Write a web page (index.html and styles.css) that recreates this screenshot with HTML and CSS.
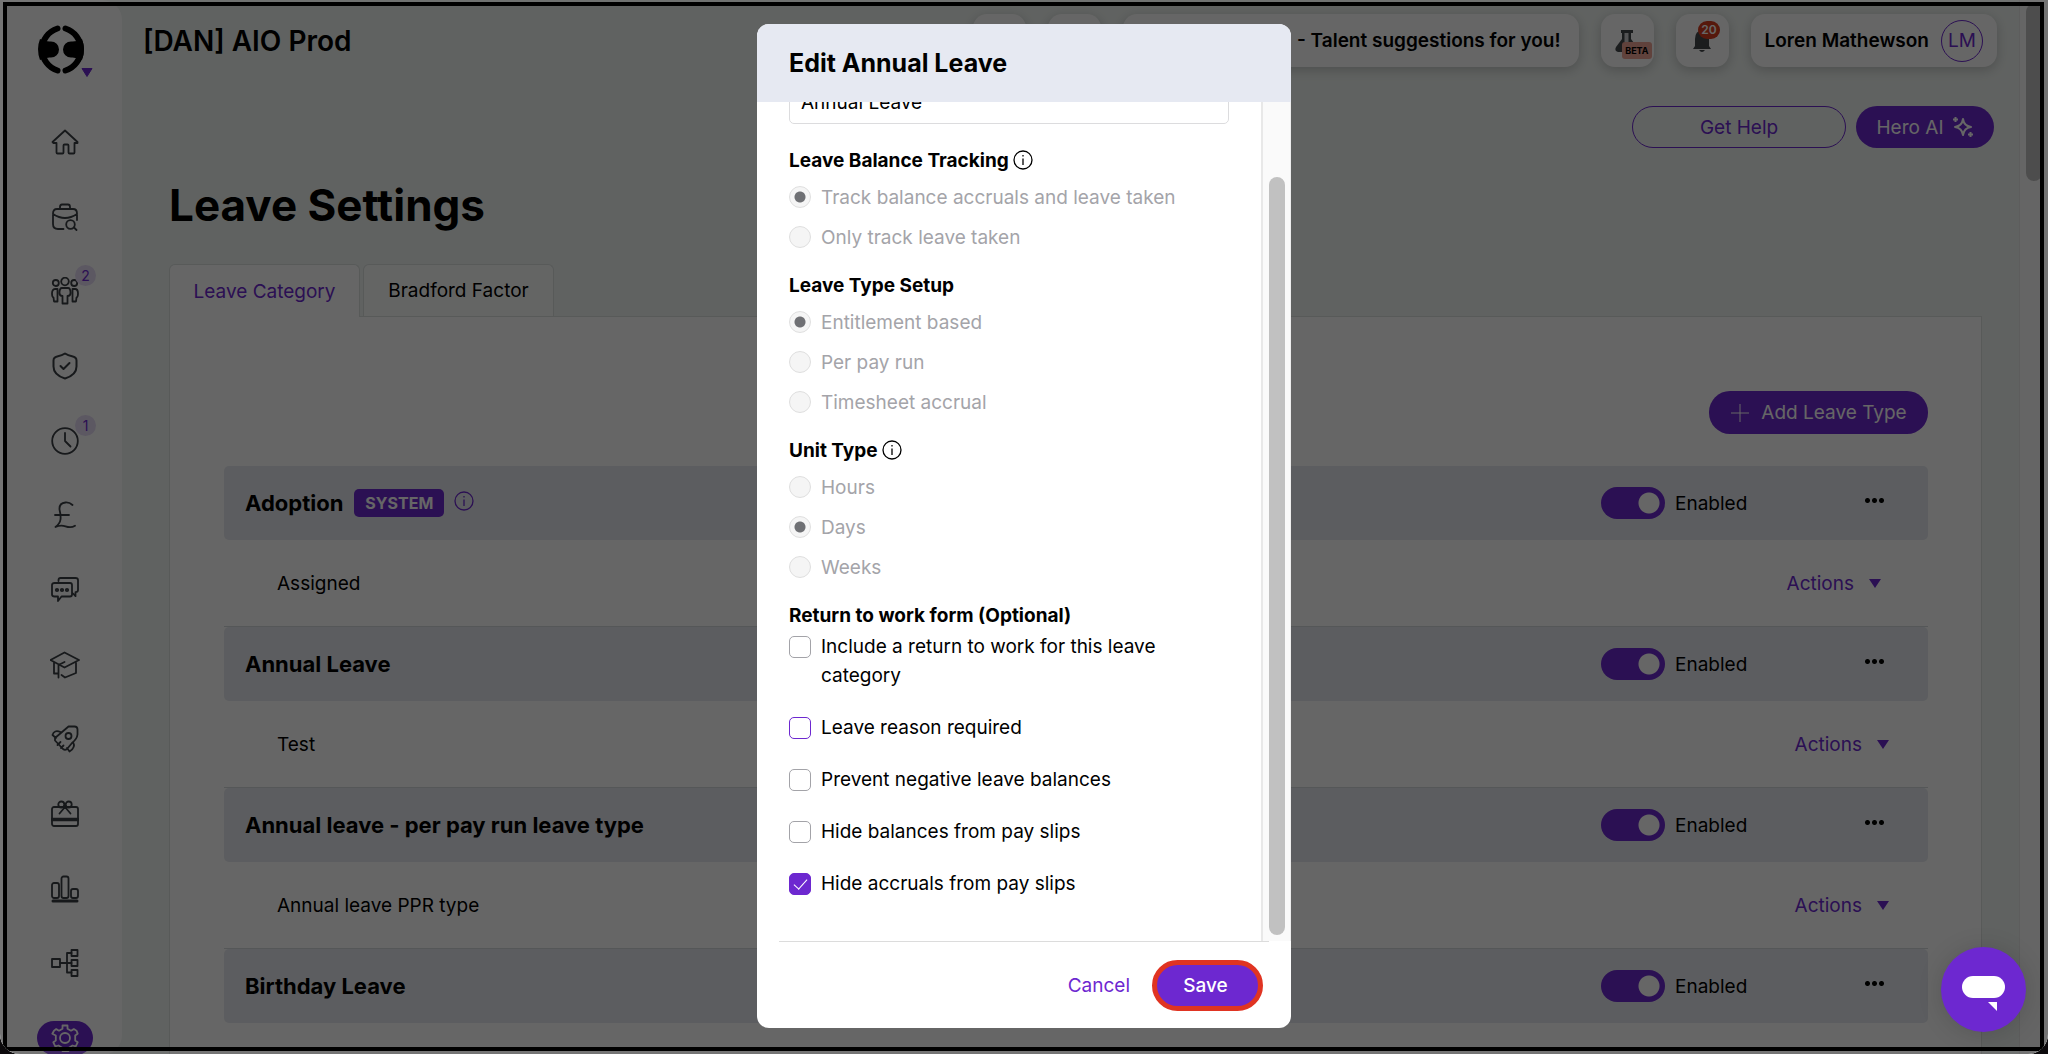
FILE: index.html
```html
<!DOCTYPE html>
<html lang="en">
<head>
<meta charset="utf-8">
<title>Leave Settings</title>
<link rel="stylesheet" href="styles.css">
</head>
<body>
<div class="app">
  <aside class="sidebar">
    <a class="logo" href="#" aria-label="Home page">
      <svg width="58" height="54" viewBox="0 0 58 54">
        <path d="M21.500 4.500A22 22 0 0 0 21.500 46.500M29.500 4.500A22 22 0 0 1 29.500 46.500" fill="none" stroke="#000" stroke-width="6" stroke-linecap="round"/>
        <path d="M4 15Q10 18 15 17.500A8 8 0 1 1 15 33.500Q10 33 4 36Q0 25 4 15Z"/>
        <path d="M46 15Q40 18 35 17.500A8 8 0 1 0 35 33.500Q40 33 46 36Q50 25 46 15Z"/>
        <path d="M46 44.500h10l-5 8z" fill="#6d28d0" stroke="#6d28d0" stroke-linejoin="round"/>
      </svg>
    </a>
    <nav class="nav">
      <a class="nav-item" href="#" aria-label="Dashboard"><svg class="nav-icon" viewBox="0 0 28 28"><path d="M1.500 14 14 2.500 26.500 14v1h-3v9.500q0 1-1 1h-4q-1 0-1-1v-7q0-1-1-1h-3q-1 0-1 1v7q0 1-1 1h-5q-1 0-1-1V15h-3z"/></svg></a>
      <a class="nav-item" href="#" aria-label="Recruitment"><svg class="nav-icon" viewBox="0 0 28 28"><path d="M9 6V4q0-2.500 2-2.500h6q2 0 2 2.500v2M26 17v-6.500Q26 6 22 6H6Q2 6 2 10.500V21q0 5 5 5h5.500M2 11q12 8 24 0"/><circle cx="19.500" cy="21.500" r="4.300"/><path d="m23 24.500 2.500 2.500"/></svg></a>
      <a class="nav-item" href="#" aria-label="People"><svg class="nav-icon" viewBox="0 0 28 28"><circle cx="14" cy="4.500" r="3.800"/><circle cx="4.800" cy="6" r="3"/><circle cx="23.200" cy="6" r="3"/><path d="M11.500 26.500h5v-7.500q3 0 3-3 0-5-2.500-5h-6q-2.500 0-2.500 5 0 3 3 3zM6.500 12H4q-3 0-3 4.500 0 3.500 1.500 4l.5 4h3.500v-4M21.500 12H24q3 0 3 4.500 0 3.500-1.500 4l-.5 4h-3.500v-4M6.500 12v8M21.500 12v8"/></svg><span class="nav-badge">2</span></a>
      <a class="nav-item" href="#" aria-label="Compliance"><svg class="nav-icon bold" viewBox="0 0 28 28"><path d="M14 1.500q3 2 7 2.800 4.500.8 4.500 4.200v6q0 8.500-11.500 12-11.500-3.500-11.500-12v-6q0-3.400 4.500-4.200 4-.8 7-2.800zM9.500 14l3 3 6-6"/></svg></a>
      <a class="nav-item" href="#" aria-label="Time"><svg class="nav-icon" viewBox="0 0 28 28"><circle cx="14" cy="14" r="12.800"/><path d="M14 6v8l5.500 5.500"/></svg><span class="nav-badge">1</span></a>
      <a class="nav-item" href="#" aria-label="Payroll"><svg class="nav-icon" viewBox="0 0 28 28"><path d="M21.500 4q-3-2.800-7-2.500-6.500.7-6 7 1.500 6 1 10-.5 4-5 7.500 5-2.500 10-.7 5.500 2 9.500-.5M4 14h14"/></svg></a>
      <a class="nav-item" href="#" aria-label="Messages"><svg class="nav-icon" viewBox="0 0 28 28"><path d="M7.500 5V4q0-2 2-2h15q2.500 0 2.500 2v10q0 2-2.500 2.200v4L22 17.500M3.500 7H19q2 0 2 2v9.500q0 2-2 2h-8.500L7 25v-4.500H3.500q-2.500 0-2.500-2V9q0-2 2.500-2z"/><circle cx="6" cy="14" r="1.200"/><circle cx="11" cy="14" r="1.200"/><circle cx="16" cy="14" r="1.200"/></svg></a>
      <a class="nav-item" href="#" aria-label="Learning"><svg class="nav-icon wide" viewBox="-1 0 30 28"><path d="M13.500 1.500 28 9l-14.500 7.500L-.5 9zM13.500 11 7.500 14v12.500M3 12v10.500h4M25 12v10l-11 4.500L10.500 24"/></svg></a>
      <a class="nav-item" href="#" aria-label="Onboarding"><svg class="nav-icon" viewBox="0 0 28 28"><path d="M17.500 1.500h6q3 0 3 3v5Q26 14 21 18l-5 6q-2 1.500-4 0l-8-8.500v-2.500zM9.500 7Q3 4.500 1.500 10L5 13M22 17q3 5.500-3.500 9.500L16 23M6.500 20l3-3M10 23l2.500-2.500"/><circle cx="17.500" cy="11" r="3"/></svg></a>
      <a class="nav-item" href="#" aria-label="Benefits"><svg class="nav-icon" viewBox="0 0 28 28"><rect x="1" y="7" width="26" height="19" rx="2"/><path d="M14 7 8.500 13.500M14 7l5.500 6.500"/><path d="M1 19.500h26" stroke-width="3.500"/><circle cx="10.300" cy="4.500" r="3"/><circle cx="17.700" cy="4.500" r="3"/></svg></a>
      <a class="nav-item" href="#" aria-label="Reports"><svg class="nav-icon" viewBox="0 0 28 28"><rect x="1" y="8" width="7" height="15" rx="2"/><rect x="10.500" y="1.500" width="7" height="21.500" rx="2"/><rect x="20" y="14" width="7" height="9" rx="2"/><path d="M2 26h24" stroke-width="3"/></svg></a>
      <a class="nav-item" href="#" aria-label="Organisation"><svg class="nav-icon" viewBox="0 0 28 28"><rect x="1" y="10" width="8" height="8"/><rect x="20.500" y="1" width="6" height="6"/><rect x="20.500" y="11" width="6" height="6"/><rect x="20.500" y="21" width="6" height="6"/><path d="M9 14h11.500M20.500 4H16v19.500h4.500"/></svg></a>
      <a class="nav-item active" href="#" aria-label="Settings"><svg class="nav-icon" viewBox="0 0 28 28"><circle cx="14" cy="14" r="5"/><path d="M11.500 1.500h5v3.200l3.500 2 2.800-1.600 2.700 1.600 1.200 3-2.500 1.800v5l2.500 1.800-2 4-3.200-.8-4 2.500v3h-6v-3l-4-2.500-3.200.8-2-4 2.500-1.800v-5L1.300 9.700l1.700-3 2.200-1.600L8 6.700l3.500-2z"/></svg></a>
    </nav>
  </aside>

  <div class="page">
    <header class="topbar">
      <div class="company">[DAN] AIO Prod</div>
      <div class="chips">
        <button class="chip square" aria-label="Search"></button>
        <button class="chip square" aria-label="Rewards"></button>
        <button class="chip news">- Talent suggestions for you!</button>
        <button class="chip square" aria-label="Beta features">
          <svg width="28" height="24" viewBox="0 0 28 24"><path d="M8 1h12v3h-2v6l6 8q2 5-3 5H5q-4-1-2-5l6-8V4H8z" fill="#45494d"/><path d="M11.500 4h4v9h-4z" fill="#cfd0d2"/></svg>
          <span class="beta">BETA</span>
        </button>
        <button class="chip square" aria-label="Notifications">
          <svg width="20" height="24" viewBox="0 0 20 24"><path d="M10 1q7 1 7 9v7l2 3H1l2-3v-7q0-8 7-9zM7 21h6q-3 4-6 0z" fill="#45494d"/></svg>
          <span class="count">20</span>
        </button>
        <button class="chip user">Loren Mathewson<span class="avatar">LM</span></button>
      </div>
    </header>

    <main class="main">
      <div class="help">
        <button class="pill outline">Get Help</button>
        <button class="pill solid hero">Hero AI
          <svg width="20" height="20" viewBox="0 0 20 20" fill="none" stroke="#fff" stroke-width="2" stroke-linejoin="round"><path d="M10 2q1 7 8 8-7 1-8 8-1-7-8-8 7-1 8-8zM2.500 0v5M0 2.500h5M17.500 15v5M15 17.500h5" /></svg>
        </button>
      </div>
      <h1 class="title">Leave Settings</h1>
      <div class="tabs">
        <button class="tab selected">Leave Category</button>
        <button class="tab">Bradford Factor</button>
      </div>
      <section class="panel">
        <div class="panel-actions">
          <button class="pill solid add"><svg width="20" height="20" viewBox="0 0 20 20" stroke="#fff"><path d="M10 1v18M1 10h18"/></svg>Add Leave Type</button>
        </div>

        <div class="category">
          <h2 class="category-name">Adoption</h2><span class="system">SYSTEM</span>
          <svg class="info accent" viewBox="0 0 20 20"><circle cx="10" cy="10" r="9"/><path d="M10 8.500V15M10 5v1.500"/></svg>
          <label class="switch"><input type="checkbox" checked>Enabled</label>
          <button class="more" aria-label="More"></button>
        </div>
        <div class="type"><span>Assigned</span><button class="actions early">Actions</button></div>

        <div class="category">
          <h2 class="category-name">Annual Leave</h2>
          <label class="switch"><input type="checkbox" checked>Enabled</label>
          <button class="more" aria-label="More"></button>
        </div>
        <div class="type"><span>Test</span><button class="actions">Actions</button></div>

        <div class="category">
          <h2 class="category-name">Annual leave - per pay run leave type</h2>
          <label class="switch"><input type="checkbox" checked>Enabled</label>
          <button class="more" aria-label="More"></button>
        </div>
        <div class="type"><span>Annual leave PPR type</span><button class="actions">Actions</button></div>

        <div class="category">
          <h2 class="category-name">Birthday Leave</h2>
          <label class="switch"><input type="checkbox" checked>Enabled</label>
          <button class="more" aria-label="More"></button>
        </div>
      </section>
    </main>
  </div>
  <div class="page-scroll"><div class="page-thumb"></div></div>

  <div class="overlay">
    <form class="modal" role="dialog" aria-labelledby="modal-title">
      <header class="modal-head"><h2 class="modal-title" id="modal-title">Edit Annual Leave</h2></header>
      <div class="modal-body">
        <div class="fields">
          <input class="text" type="text" value="Annual Leave" aria-label="Name">
          <fieldset class="group" disabled>
            <legend class="legend">Leave Balance Tracking <svg class="info" viewBox="0 0 20 20"><circle cx="10" cy="10" r="9"/><path d="M10 8.500V15M10 5v1.500"/></svg></legend>
            <label class="choice"><input type="radio" name="tracking" checked>Track balance accruals and leave taken</label>
            <label class="choice"><input type="radio" name="tracking">Only track leave taken</label>
          </fieldset>
          <fieldset class="group" disabled>
            <legend class="legend">Leave Type Setup</legend>
            <label class="choice"><input type="radio" name="setup" checked>Entitlement based</label>
            <label class="choice"><input type="radio" name="setup">Per pay run</label>
            <label class="choice"><input type="radio" name="setup">Timesheet accrual</label>
          </fieldset>
          <fieldset class="group" disabled>
            <legend class="legend">Unit Type <svg class="info" viewBox="0 0 20 20"><circle cx="10" cy="10" r="9"/><path d="M10 8.500V15M10 5v1.500"/></svg></legend>
            <label class="choice"><input type="radio" name="unit">Hours</label>
            <label class="choice"><input type="radio" name="unit" checked>Days</label>
            <label class="choice"><input type="radio" name="unit">Weeks</label>
          </fieldset>
          <fieldset class="group">
            <legend class="legend">Return to work form (Optional)</legend>
            <div class="checks">
              <label class="check"><input type="checkbox">Include a return to work for this leave category</label>
              <label class="check"><input class="focused" type="checkbox">Leave reason required</label>
              <label class="check"><input type="checkbox">Prevent negative leave balances</label>
              <label class="check"><input type="checkbox">Hide balances from pay slips</label>
              <label class="check"><input type="checkbox" checked>Hide accruals from pay slips</label>
            </div>
          </fieldset>
        </div>
        <div class="modal-scroll"><div class="modal-thumb"></div></div>
      </div>
      <footer class="modal-foot">
        <button class="cancel" type="button">Cancel</button>
        <button class="save" type="button">Save</button>
      </footer>
    </form>
  </div>

  <button class="chat" aria-label="Open chat">
    <svg width="44" height="36" viewBox="0 0 44 36" fill="#fff"><rect width="43" height="22" rx="11"/><path d="M26 26h9v9z"/></svg>
  </button>
  <div class="frame"></div>
</div>
</body>
</html>
```
FILE: styles.css
```css
* { box-sizing: border-box; }
body {
  margin: 0;
  background: #0c0a0c;
  color: #000;
  font: 19px/29px Inter, "Noto Sans", sans-serif;
}
button, input { font: inherit; color: inherit; }
button { padding: 0; border: 0; background: none; }
h1, h2, fieldset, legend { margin: 0; padding: 0; border: 0; min-width: 0; }

.app {
  position: relative;
  display: flex;
  height: 100vh;
  overflow: hidden;
  border-radius: 0 0 20px 20px;
  background: #f0f5f2;
}

/* sidebar */
.sidebar {
  display: flex;
  flex-direction: column;
  flex: none;
  width: 122px;
  height: calc(100vh + 1px);
  padding-top: 24px;
  border-radius: 0 20px 20px 0;
  background: #fff;
}
.logo { margin-left: 36px; height: 54px; }
.nav {
  display: flex;
  flex-direction: column;
  flex: 1;
  justify-content: space-between;
  margin-top: 47px;
  padding-left: 37px;
}
.nav-item {
  position: relative;
  display: flex;
  align-items: center;
  justify-content: center;
  width: 56px;
  height: 34px;
  border-radius: 17px;
  color: #3a3f44;
  text-decoration: none;
}
.nav-item.active { background: #6d28d0; color: #fff; }
.nav-icon {
  width: 28px;
  height: 28px;
  fill: none;
  stroke: currentColor;
  stroke-width: 1.8;
  stroke-linejoin: round;
  stroke-linecap: round;
}
.nav-icon.bold { stroke-width: 2; }
.nav-icon.wide { width: 30px; }
.nav-badge {
  position: absolute;
  top: -9px;
  left: 38px;
  width: 21px;
  border-radius: 50%;
  background: #e6dcf5;
  color: #6d28d0;
  font-size: 14px;
  line-height: 21px;
  text-align: center;
}

/* top bar */
.page { flex: 1; min-width: 0; }
.topbar {
  display: flex;
  justify-content: space-between;
  padding: 14px 22px 0 21px;
}
.company { font-size: 28px; font-weight: 600; line-height: 54px; }
.chips { display: flex; gap: 22px; }
.chip {
  position: relative;
  height: 53px;
  border-radius: 14px;
  background: #fff;
  box-shadow: 0 3px 12px rgba(0, 0, 0, .2);
  font-weight: 600;
}
.square { display: grid; place-items: center; width: 53px; }
.news { width: 456px; padding-right: 18px; text-align: right; }
.user { display: flex; align-items: center; gap: 12px; padding: 0 14px; }
.avatar {
  width: 42px;
  border: 1px solid #6d28d0;
  border-radius: 50%;
  color: #6d28d0;
  font-weight: 400;
  line-height: 40px;
}
.beta {
  position: absolute;
  right: 2px;
  bottom: 8px;
  padding: 0 3px;
  border-radius: 3px;
  background: #f0a596;
  font-size: 9px;
  font-weight: 700;
  line-height: 17px;
}
.count {
  position: absolute;
  top: 7px;
  right: 9px;
  padding: 0 3px;
  border-radius: 9px;
  background: #d63c1e;
  color: #fff;
  font-size: 12px;
  line-height: 18px;
}

/* content */
.main { padding: 38px 37px 0 47px; }
.help { display: flex; justify-content: flex-end; gap: 10px; margin-right: -12px; }
.pill { height: 42px; border-radius: 21px; }
.outline { width: 214px; border: 1px solid #6d28d0; color: #6d28d0; }
.solid { background: #6d28d0; color: #fff; }
.hero { display: flex; align-items: center; justify-content: center; gap: 10px; width: 138px; }
.title { padding-top: 28px; font-size: 44px; font-weight: 700; line-height: 58px; }
.tabs { display: flex; gap: 3px; margin-top: 30px; }
.tab {
  width: 191px;
  height: 52px;
  border: 1px solid #dbe0de;
  border-bottom: 0;
  border-radius: 6px 6px 0 0;
  background: #fafcfb;
}
.selected {
  position: relative;
  height: 53px;
  margin-bottom: -1px;
  background: #fff;
  color: #6d28d0;
}
.panel {
  height: 900px;
  padding: 74px 53px 0 54px;
  border: 1px solid #dbe0de;
  background: #fff;
}
.panel-actions { display: flex; justify-content: flex-end; padding-bottom: 32px; }
.add { display: flex; align-items: center; justify-content: center; gap: 11px; width: 219px; height: 43px; }
.category {
  display: flex;
  align-items: center;
  height: 74px;
  padding: 0 43px 0 21px;
  border-radius: 5px;
  background: #e6e9ef;
}
.category-name { font-size: 22px; font-weight: 700; }
.system {
  margin: 0 10px 0 11px;
  padding: 0 11px;
  border-radius: 5px;
  background: #6d28d0;
  color: #fff;
  font-size: 16px;
  font-weight: 700;
  line-height: 28px;
}
.info {
  width: 20px;
  height: 20px;
  fill: none;
  stroke: #000;
  stroke-width: 1.3;
  vertical-align: -3px;
}
.accent { margin-bottom: 5px; stroke: #6d28d0; }
.switch { display: flex; align-items: center; gap: 10px; width: 263px; margin-left: auto; }
.switch input {
  appearance: none;
  width: 64px;
  height: 32px;
  margin: 0;
  border-radius: 16px;
  background: radial-gradient(circle at 48px 16px, #fff 10px, #6d28d0 11px);
}
.more {
  width: 21px;
  height: 5px;
  margin-bottom: 6px;
  background: radial-gradient(circle at center, #000 2px, transparent 3px) 0 0 / 7px 5px;
}
.type {
  display: flex;
  align-items: center;
  justify-content: space-between;
  height: 87px;
  padding: 0 39px 0 53px;
  border-bottom: 1px solid #d5dadc;
}
.actions { display: flex; align-items: center; gap: 15px; color: #6d28d0; }
.actions.early { padding-right: 8px; }
.actions::after {
  content: "";
  border: solid transparent;
  border-width: 9px 6px 0;
  border-top-color: #6d28d0;
}
.page-scroll {
  flex: none;
  width: 29px;
  padding: 4px 0 0 6px;
  border-left: 1px solid #e8e8e8;
  background: #fdfdfd;
}
.page-thumb { width: 16px; height: 177px; border-radius: 8px; background: #c1c1c1; }

/* dialog */
.overlay {
  position: absolute;
  inset: 0;
  display: flex;
  justify-content: center;
  padding: 24px 0 26px;
  background: rgba(0, 0, 0, .6);
}
.modal {
  display: flex;
  flex-direction: column;
  width: 534px;
  border-radius: 12px;
  overflow: hidden;
  background: #fff;
}
.modal-head { padding: 0 32px; background: #e6e9f2; }
.modal-title { font-size: 25px; font-weight: 700; line-height: 78px; }
.modal-body { display: flex; flex: 1; min-height: 0; overflow: hidden; }
.fields {
  display: flex;
  flex: 1;
  flex-direction: column;
  justify-content: flex-end;
  gap: 13px;
  padding: 0 32px 43px;
}
.text {
  flex: none;
  height: 44px;
  margin-bottom: 8px;
  padding: 0 11px;
  border: 1px solid #dcdcde;
  border-radius: 5px;
  background: #fff;
}
.legend { font-weight: 700; line-height: 32px; }
.choice { display: flex; align-items: center; gap: 10px; height: 40px; color: #a4a4a9; }
.choice input {
  appearance: none;
  width: 22px;
  height: 22px;
  margin: 0;
  border: 1px solid #dfdfdf;
  border-radius: 50%;
  background: #f5f5f5;
}
.choice input:checked { background: radial-gradient(circle, #6f7074 5px, #f5f5f5 6px); }
.checks { display: flex; flex-direction: column; gap: 23px; }
.check { display: flex; gap: 10px; }
.check input {
  appearance: none;
  flex: none;
  width: 22px;
  height: 22px;
  margin: 4px 0 0;
  border: 1px solid #a3a3a8;
  border-radius: 5px;
}
.check .focused { border-color: #6d28d0; }
.check input:checked { display: grid; place-items: center; border-color: #6d28d0; background: #6d28d0; }
.check input:checked::before {
  content: "";
  width: 12px;
  height: 6px;
  margin-bottom: 4px;
  border: solid #fff;
  border-width: 0 0 1px 1px;
  transform: rotate(-48deg);
}
.modal-scroll {
  display: flex;
  flex: none;
  width: 30px;
  padding: 75px 5px 6px 6px;
  border-left: 2px solid #e8e8e8;
  border-right: 1px solid #ededed;
  background: #fafafa;
}
.modal-thumb { flex: 1; border-radius: 8px; background: #c1c1c1; }
.modal-foot {
  display: flex;
  align-items: center;
  justify-content: flex-end;
  gap: 22px;
  height: 87px;
  margin: 0 22px;
  padding-right: 6px;
  border-top: 1px solid #dcdcdc;
}
.cancel { color: #6d28d0; }
.save {
  width: 111px;
  height: 51px;
  padding-right: 4px;
  border: 5px solid #e03422;
  border-radius: 26px;
  background: #6d28d0;
  color: #fff;
  font-weight: 500;
}

/* floating chat launcher and window outline */
.chat {
  position: absolute;
  right: 22px;
  bottom: 22px;
  display: grid;
  place-items: center;
  width: 85px;
  height: 85px;
  padding-top: 8px;
  border-radius: 50%;
  background: #6d28d0;
  box-shadow: 0 2px 24px rgba(0, 0, 0, .15);
}
.frame {
  position: absolute;
  inset: 2px 4px 3px 3px;
  border: 4px solid #000;
  box-shadow: 0 0 0 4px rgba(255, 255, 255, .1);
  pointer-events: none;
}
```
